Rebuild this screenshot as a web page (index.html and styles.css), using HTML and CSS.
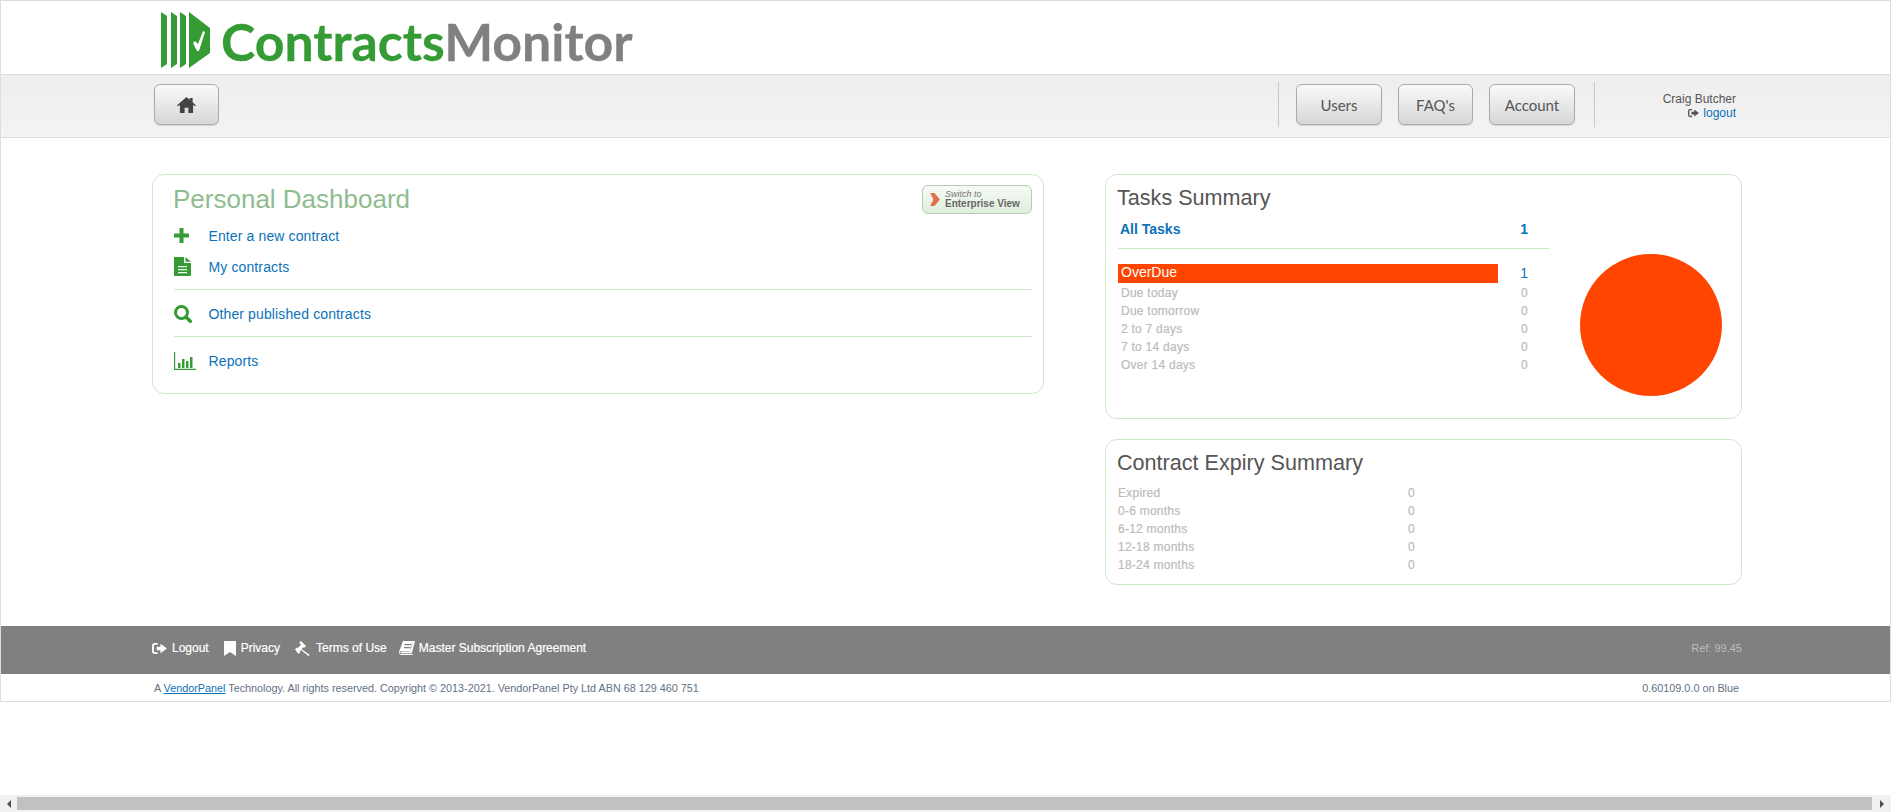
FILE: index.html
```html
<!DOCTYPE html>
<html lang="en">
<head>
<meta charset="utf-8">
<title>ContractsMonitor</title>
<link rel="stylesheet" href="styles.css">
</head>
<body>
<div class="frame">
  <header class="brand">
    <svg class="logo-mark" viewBox="0 0 49 56" width="49" height="56">
      <path fill="#359b35" d="M0 0l6 4v48l-6 4zM10 0l6 4v48l-6 4zM19 0l6 4v48l-6 4z"/>
      <path fill="#359b35" d="M28 0l21 16v25L28 56z"/>
      <path fill="#fff" d="M34 29l3 3 5-13 2 1-6 19h-2l-4-8z"/>
    </svg>
    <div class="logo-text"><span class="logo-green">Contracts</span><span class="logo-grey">Monitor</span></div>
  </header>

  <nav class="nav">
    <a class="btn btn-home" href="#">
      <svg viewBox="0 0 20 17" width="19" height="16"><path fill="#444" d="M10 0L0 8.7l1 1.2L3 8.2V17h5v-5.500h4V17h5V8.200l2 1.700 1-1.200L16.500 5.600V1h-3v2z"/></svg>
    </a>
    <div class="nav-right">
      <span class="sep"></span>
      <a class="btn btn-users" href="#">Users</a>
      <a class="btn btn-faq" href="#">FAQ's</a>
      <a class="btn btn-account" href="#">Account</a>
      <span class="sep sep-last"></span>
      <div class="user">
        <div>Craig Butcher</div>
        <div class="user-logout">
          <svg viewBox="0 0 16 14" width="11" height="10"><path fill="#555" d="M6 1H3a3 3 0 0 0-3 3v6a3 3 0 0 0 3 3h3v-2H3a1 1 0 0 1-1-1V4a1 1 0 0 1 1-1h3zM9 2v3H5v4h4v3l7-5z"/></svg>
          <a href="#">logout</a>
        </div>
      </div>
    </div>
  </nav>

  <main class="main">
    <section class="panel dash">
      <div class="dash-head">
        <h1>Personal Dashboard</h1>
        <a class="switch" href="#">
          <svg viewBox="0 0 9 12" width="10" height="13"><path fill="#e2704e" d="M0 0h4l5 6-5 6H0l3-6z"/></svg>
          <span class="switch-text"><i>Switch to</i><b>Enterprise View</b></span>
        </a>
      </div>
      <a class="dash-row" href="#">
        <span class="dash-icon"><svg viewBox="0 0 15 15" width="15" height="15"><path fill="#359b35" d="M5.500.500a.5.5 0 0 1 .5-.5h3a.5.5 0 0 1 .5.500v5h5a.5.5 0 0 1 .5.500v3a.5.5 0 0 1-.5.500h-5v5a.5.5 0 0 1-.5.500H6a.5.5 0 0 1-.5-.5v-5h-5A.5.500 0 0 1 0 9V6a.5.5 0 0 1 .5-.5h5z"/></svg></span>
        Enter a new contract
      </a>
      <a class="dash-row" href="#">
        <span class="dash-icon"><svg viewBox="0 0 17 19" width="17" height="19"><path fill="#359b35" fill-rule="evenodd" d="M0 1a1 1 0 0 1 1-1h9v6h7v12a1 1 0 0 1-1 1H1a1 1 0 0 1-1-1zM4 9v1.300h9V9zM4 12v1.300h9V12zM4 15v1.300h9V15z"/><path fill="#359b35" d="M11.500 0L17 4.800h-5.500z"/></svg></span>
        My contracts
      </a>
      <hr class="rule">
      <a class="dash-row" href="#">
        <span class="dash-icon"><svg viewBox="0 0 18 18" width="18" height="18"><circle cx="7.500" cy="7.500" r="6" fill="none" stroke="#359b35" stroke-width="3"/><path stroke="#359b35" stroke-width="3.500" stroke-linecap="round" d="M12 12l4.300 4.300"/></svg></span>
        Other published contracts
      </a>
      <hr class="rule">
      <a class="dash-row" href="#">
        <span class="dash-icon"><svg viewBox="0 0 22 18" width="22" height="18"><path fill="#359b35" d="M0 0h1.200v16.800H22V18H0zM4 11h2.500v5H4zM8 7h2.500v9H8zM12 9h2.500v7H12zM16 5h2.500v11H16z"/></svg></span>
        Reports
      </a>
    </section>

    <div class="side">
      <section class="panel tasks">
        <div class="tasks-left">
          <h2>Tasks Summary</h2>
          <div class="task-row task-all"><span>All Tasks</span><span>1</span></div>
          <hr class="rule rule-tasks">
          <div class="task-row task-over"><span class="over-bar">OverDue</span><span class="over-num">1</span></div>
          <div class="task-row task-zero"><span>Due today</span><span>0</span></div>
          <div class="task-row task-zero"><span>Due tomorrow</span><span>0</span></div>
          <div class="task-row task-zero"><span>2 to 7 days</span><span>0</span></div>
          <div class="task-row task-zero"><span>7 to 14 days</span><span>0</span></div>
          <div class="task-row task-zero"><span>Over 14 days</span><span>0</span></div>
        </div>
        <div class="pie"></div>
      </section>

      <section class="panel expiry">
        <h2>Contract Expiry Summary</h2>
        <div class="exp-row"><span>Expired</span><span>0</span></div>
        <div class="exp-row"><span>0-6 months</span><span>0</span></div>
        <div class="exp-row"><span>6-12 months</span><span>0</span></div>
        <div class="exp-row"><span>12-18 months</span><span>0</span></div>
        <div class="exp-row"><span>18-24 months</span><span>0</span></div>
      </section>
    </div>
  </main>

  <footer class="foot">
    <div class="foot-links">
      <a href="#"><svg viewBox="0 0 16 14" width="15" height="13"><path fill="#fff" d="M6 1H3a3 3 0 0 0-3 3v6a3 3 0 0 0 3 3h3v-2H3a1 1 0 0 1-1-1V4a1 1 0 0 1 1-1h3zM9 2v3H5v4h4v3l7-5z"/></svg>Logout</a>
      <a href="#"><svg viewBox="0 0 12 15" width="12" height="15"><path fill="#fff" d="M0 0h12v15l-6-4-6 4z"/></svg>Privacy</a>
      <a href="#"><svg viewBox="0 0 16 15" width="16" height="15"><path fill="#fff" d="M6 0l5 5-2 2-.8-.8-1.700 1.700L14.800 14l-1.300 1L6 9 4.800 10.200l.6.800-1.900 1.900L0 8.400l1.900-1.900.7.700L6.200 3.600 5.400 2.800 4 2z"/></svg>Terms of Use</a>
      <a class="link-book" href="#"><svg viewBox="0 0 16 14" width="16" height="14"><path fill="#fff" fill-rule="evenodd" d="M4 0h12l-3 11.500a1 1 0 0 1-1 .7H2.500c-1 0-1-1.700 0-1.700H11L13.500 2 13 1.500 11 10H2C1 10 .8 11 1 12c.2.800 1 1 2 1h10.500l.5 1H3C1 14 0 13 0 11z M5.500 3v1.200h6.500V3zM5 6v1.200h6.500V6z"/></svg>Master Subscription Agreement</a>
    </div>
    <div class="foot-ref">Ref: 99.45</div>
  </footer>

  <div class="copy">
    <div>A <a href="#">VendorPanel</a> Technology. All rights reserved. Copyright © 2013-2021. VendorPanel Pty Ltd ABN 68 129 460 751</div>
    <div>0.60109.0.0 on Blue</div>
  </div>
</div>

<div class="scrollbar">
  <span class="arrow arrow-left"></span>
  <span class="thumb"></span>
  <span class="arrow arrow-right"></span>
</div>
</body>
</html>
```

FILE: styles.css
```css
* { box-sizing: border-box; }

html, body { margin: 0; height: 812px; overflow: hidden; background: #fff; }

body {
  display: flex;
  flex-direction: column;
  justify-content: space-between;
  font-family: "Liberation Sans", Arial, sans-serif;
  font-size: 14px;
}

a { color: #0b72b9; text-decoration: none; }

.frame { border: 1px solid #ddd; height: 702px; display: flex; flex-direction: column; }

/* Brand */
.brand { height: 73px; padding: 11px 0 0 160px; display: flex; align-items: flex-start; flex: none; }
.logo-text { font-family: Lato, sans-serif; font-weight: 700; font-size: 51.800px; line-height: 58px; margin: 0 0 0 11px; white-space: nowrap; -webkit-text-stroke: .3px currentColor; }
.logo-green { color: #359b35; }
.logo-grey { color: #808080; }

/* Nav */
.nav {
  height: 64px; flex: none;
  border-top: 1px solid #ddd; border-bottom: 1px solid #ddd;
  background: linear-gradient(#eeeeee, #f3f3f3);
  display: flex; align-items: center; justify-content: space-between;
  padding: 0 154px 3px 153px;
}
.nav-right { display: flex; align-items: center; }
.btn {
  height: 41px; display: flex; align-items: center; justify-content: center;
  border: 1px solid #ababab; border-radius: 6px;
  background: linear-gradient(#fafafa, #d6d6d6);
  box-shadow: 0 1px 1px rgba(0,0,0,.12);
  color: #555; font-family: Lato, sans-serif; font-size: 15px;
}
.btn-home { width: 65px; }
.btn-users { width: 86px; margin-left: 17px; }
.btn-faq { width: 75px; margin-left: 16px; }
.btn-account { width: 86px; margin-left: 16px; }
.sep { width: 1px; height: 45px; background: #c8c8c8; }
.sep-last { margin-left: 19px; }
.user { width: 141px; text-align: right; font-size: 12px; line-height: 14px; color: #555; padding-top: 3px; }
.user-logout { display: flex; justify-content: flex-end; align-items: center; gap: 4px; }

/* Main */
.main { flex: 1; display: flex; gap: 61px; padding: 36px 0 0 151px; align-items: flex-start; }
.panel { border: 1px solid #c9eac4; border-radius: 12px; background: #fff; }
h1, h2 { margin: 0; font-weight: 400; }

.dash { width: 892px; height: 220px; padding: 0 11px 0 21px; }
.dash-head { display: flex; justify-content: space-between; align-items: flex-start; height: 45px; }
.dash-head h1 { font-size: 26px; line-height: 30px; color: #8fbc8f; padding-top: 9px; margin-left: -1px; }
.switch {
  width: 110px; height: 29px; margin-top: 10px;
  display: flex; align-items: center; gap: 5px; padding-left: 7px;
  border: 1px solid #b4cdb4; border-radius: 6px;
  background: linear-gradient(#f7fbf6, #dfeedd);
}
.switch-text { display: flex; flex-direction: column; }
.switch-text i { font-size: 9px; line-height: 8px; color: #777; }
.switch-text b { font-size: 10px; line-height: 11px; color: #666; white-space: nowrap; }
.dash-row { display: flex; align-items: center; height: 31px; white-space: nowrap; letter-spacing: .12px; }
.dash-icon { width: 34.500px; flex: none; display: flex; align-items: center; }
.rule { border: 0; border-top: 1px solid #c9eac4; margin: 7px 0 8px; }

/* Side */
.side { width: 637px; display: flex; flex-direction: column; gap: 20px; }
.panel h2 { font-size: 21.600px; line-height: 26px; color: #555; }

.tasks { height: 245px; display: flex; padding: 10px 0 0 12px; }
.tasks-left { width: 431px; flex: none; }
.tasks-left h2 { margin-left: -1px; }
.task-row { display: flex; justify-content: space-between; padding: 0 21px 0 3px; }
.task-all { margin-top: 8px; height: 20px; align-items: center; font-weight: 700; font-size: 14px; color: #0b72b9; padding-left: 2px; }
.rule-tasks { margin: 9px 0 14px; }
.task-over { padding: 0 21px 0 0; height: 20px; align-items: center; margin-bottom: 1px; }
.over-bar { width: 380px; height: 19px; line-height: 17px; background: #ff4500; color: #fff; padding-left: 3px; }
.over-num { color: #0b72b9; }
.task-zero { height: 18px; align-items: center; font-size: 12px; color: #bbb; letter-spacing: .25px; -webkit-text-stroke: .2px currentColor; }
.pie { width: 142px; height: 142px; margin: 69px 0 0 31px; border-radius: 50%; background: #ff4500; }

.expiry { height: 146px; padding: 10px 0 0 12px; }
.exp-row { display: flex; justify-content: space-between; width: 297px; height: 18px; align-items: center; padding-left: 0; font-size: 12px; color: #bbb; letter-spacing: .25px; -webkit-text-stroke: .2px currentColor; }
.expiry h2 { margin-bottom: 8px; margin-left: -1px; }

/* Footer */
.foot {
  height: 48px; flex: none; background: #808080;
  display: flex; align-items: center; justify-content: space-between;
  padding: 0 148px 4px 151px;
}
.foot-links { display: flex; gap: 15px; }
.foot-links a { display: flex; align-items: center; gap: 5px; color: #fff; font-size: 12px; white-space: nowrap; -webkit-text-stroke: .2px currentColor; }
.foot-links .link-book { margin-left: -3px; gap: 4px; }
.foot-ref { color: #bcbcbc; font-size: 11px; }

.copy {
  height: 27px; flex: none; display: flex; align-items: center; justify-content: space-between;
  padding: 0 151px 0 153px;
  font-size: 10.800px; color: #5f7183;
}
.copy a { text-decoration: underline; }

/* Scrollbar */
.scrollbar { height: 17px; flex: none; background: #f1f1f1; display: flex; align-items: center; }
.thumb { flex: 1; height: 13px; background: #c1c1c1; }
.arrow { width: 17px; flex: none; height: 17px; display: flex; align-items: center; justify-content: center; }
.arrow::before { content: ""; border-top: 4px solid transparent; border-bottom: 4px solid transparent; }
.arrow-left::before { border-right: 4px solid #505050; }
.arrow-right::before { border-left: 4px solid #505050; }
.arrow-right { width: 19px; }
```
